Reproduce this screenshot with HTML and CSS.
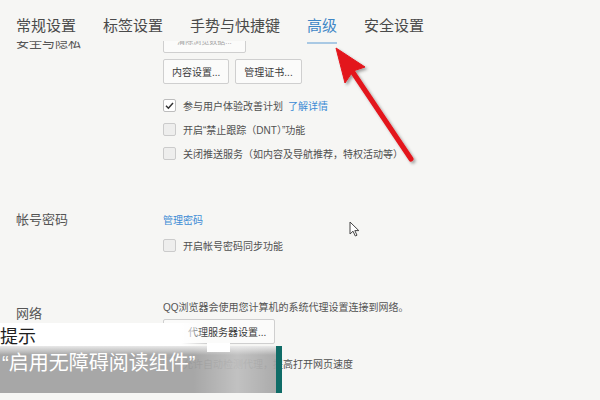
FILE: index.html
```html
<!DOCTYPE html>
<html lang="zh">
<head>
<meta charset="utf-8">
<title>高级设置</title>
<link rel="stylesheet" href="styles.css">
</head>
<body>
<nav class="tabs">
  <span class="tab">常规设置</span>
  <span class="tab">标签设置</span>
  <span class="tab">手势与快捷键</span>
  <span class="tab active">高级</span>
  <span class="tab">安全设置</span>
</nav>
<main class="viewport">
  <div class="content">
    <section class="section sec-privacy">
      <div class="label label-btn">安全与隐私</div>
      <div class="body">
        <div class="btn-row"><button class="btn btn-blur">清除浏览数据...</button></div>
        <div class="btn-row"><button class="btn">内容设置...</button><button class="btn">管理证书...</button></div>
        <div class="checks">
          <div class="check"><span class="box checked"><svg viewBox="0 0 13 13" width="13" height="13"><path d="M3 6.8 L5.4 9.2 L10 4" fill="none" stroke="#333" stroke-width="1.5"/></svg></span>参与用户体验改善计划<span class="link">了解详情</span></div>
          <div class="check"><span class="box"></span>开启“禁止跟踪（DNT）”功能</div>
          <div class="check"><span class="box"></span>关闭推送服务（如内容及导航推荐，特权活动等）</div>
        </div>
      </div>
    </section>
    <section class="section sec-account">
      <div class="label">帐号密码</div>
      <div class="body">
        <div class="row"><span class="link">管理密码</span></div>
        <div class="check"><span class="box"></span>开启帐号密码同步功能</div>
      </div>
    </section>
    <section class="section sec-network">
      <div class="label label-low">网络</div>
      <div class="body">
        <div class="row">QQ浏览器会使用您计算机的系统代理设置连接到网络。</div>
        <div class="btn-row"><button class="btn btn-proxy">代理服务器设置...</button></div>
        <div class="check"><span class="box"></span>允许自动检测代理，提高打开网页速度</div>
      </div>
    </section>
  </div>
</main>

<div class="tip-title">提示</div>
<div class="tip-patch"></div>
<div class="tip-band">“启用无障碍阅读组件”</div>

<svg class="cursor" width="11" height="16" viewBox="0 0 11 16">
  <path d="M1 1 L1 13 L4 10.2 L6.3 15 L8 14.2 L5.8 9.6 L9.8 9.6 Z" fill="#fff" stroke="#444" stroke-width="1" stroke-linejoin="round"/>
</svg>

<svg class="arrow" width="600" height="400" viewBox="0 0 600 400">
  <defs>
    <filter id="sh" x="-20%" y="-20%" width="140%" height="140%">
      <feDropShadow dx="2" dy="2" stdDeviation="1.6" flood-color="#000" flood-opacity="0.35"/>
    </filter>
  </defs>
  <g filter="url(#sh)" fill="#e3141b" stroke="#e3141b">
    <line x1="352" y1="71" x2="411" y2="159" stroke-width="5" stroke-linecap="round"/>
    <polygon points="336,48 365,67 353,71 345,83" stroke-width="1" stroke-linejoin="round"/>
  </g>
</svg>
</body>
</html>
```
FILE: styles.css
```css
* { box-sizing: border-box; }
html, body { margin: 0; padding: 0; }
body {
  width: 600px;
  height: 400px;
  overflow: hidden;
  position: relative;
  background: #f6f6f4;
  font-family: "Noto Sans CJK SC", "Noto Sans", sans-serif;
  color: #555;
}

.tabs {
  position: relative;
  z-index: 2;
  height: 41px;
  background: #f6f6f4;
  display: flex;
  gap: 27px;
  padding: 12px 0 0 16px;
}
.tab {
  position: relative;
  font-size: 15px;
  line-height: 26px;
  color: #4a4a4a;
  white-space: nowrap;
}
.tab.active { color: #3f86c6; }
.tab.active::after {
  content: "";
  position: absolute;
  left: 0;
  right: 0;
  top: 30px;
  height: 2px;
  background: #a9c9e4;
}

.viewport {
  height: 359px;
  overflow: hidden;
}
.content { margin-top: -13px; }

.section {
  display: grid;
  grid-template-columns: 147px 1fr;
  padding-left: 16px;
}
.sec-account { margin-top: 42px; }
.sec-network { margin-top: 37px; }

.label {
  font-size: 13px;
  line-height: 24px;
  color: #555;
  white-space: nowrap;
}
.label-btn { line-height: 25px; padding-top: 1px; }
.label-low { padding-top: 7px; }

.body {
  display: flex;
  flex-direction: column;
  font-family: "Liberation Sans", "Noto Sans CJK SC", sans-serif;
  font-size: 10px;
  color: #555;
}
.sec-privacy .body { gap: 6px; }
.sec-account .body { gap: 2px; }
.sec-network .body .btn-row { margin-top: 1px; margin-bottom: 7px; }

.btn-row { display: flex; gap: 6px; }
.btn {
  height: 25px;
  padding: 0 8px;
  border: 1px solid #cfcfcf;
  border-radius: 2px;
  background: #fbfbfa;
  font-family: inherit;
  font-size: 10px;
  color: #3a3a3a;
  white-space: nowrap;
}
.btn-blur { width: 83px; font-size: 8px; color: #a5a5a5; }
.btn-proxy { width: 112px; text-align: left; padding-left: 24px; }

.checks { display: flex; flex-direction: column; margin-top: 3px; }
.row { height: 24px; display: flex; align-items: center; white-space: nowrap; }
.check {
  height: 24px;
  display: flex;
  align-items: center;
  white-space: nowrap;
  color: #505050;
}
.box {
  width: 13px;
  height: 13px;
  flex: none;
  margin-right: 7px;
  border: 1px solid #cbcbcb;
  border-radius: 2px;
  background: #eeeeed;
  display: flex;
  align-items: center;
  justify-content: center;
}
.box.checked { background: #fff; border-color: #bdbdbd; }
.box svg { display: block; margin: -1px; }
.link { color: #3b8bd4; margin-left: 5px; }
.row .link { margin-left: 0; }

/* video subtitle overlay */
.tip-title {
  position: absolute;
  left: 0;
  top: 323px;
  width: 206px;
  height: 23px;
  padding-top: 1px;
  background: linear-gradient(90deg, #fff 0%, #fff 88%, rgba(255,255,255,0) 100%);
  font-size: 18px;
  line-height: 23px;
  color: #1e1e1e;
  z-index: 3;
}
.tip-patch {
  position: absolute;
  left: 207px;
  top: 343px;
  width: 23px;
  height: 9px;
  background: #fff;
  z-index: 4;
}
.tip-band {
  position: absolute;
  left: 0;
  top: 346px;
  width: 282px;
  height: 47px;
  padding-left: 2px;
  border-right: 6px solid #0f6c67;
  background:
    linear-gradient(180deg, rgba(240,240,240,0.9) 0px, rgba(255,255,255,0) 9px),
    linear-gradient(90deg, rgba(255,255,255,0) 70%, rgba(255,255,255,0.3) 86%, rgba(255,255,255,0.05) 100%),
    rgba(160,160,160,0.93);
  font-family: "Liberation Sans", "Noto Sans CJK SC", sans-serif;
  font-size: 20px;
  line-height: 34px;
  color: #fff;
  white-space: nowrap;
  z-index: 3;
}

.cursor {
  position: absolute;
  left: 349px;
  top: 221px;
  z-index: 5;
}
.arrow {
  position: absolute;
  left: 0;
  top: 0;
  z-index: 6;
  pointer-events: none;
}
```
